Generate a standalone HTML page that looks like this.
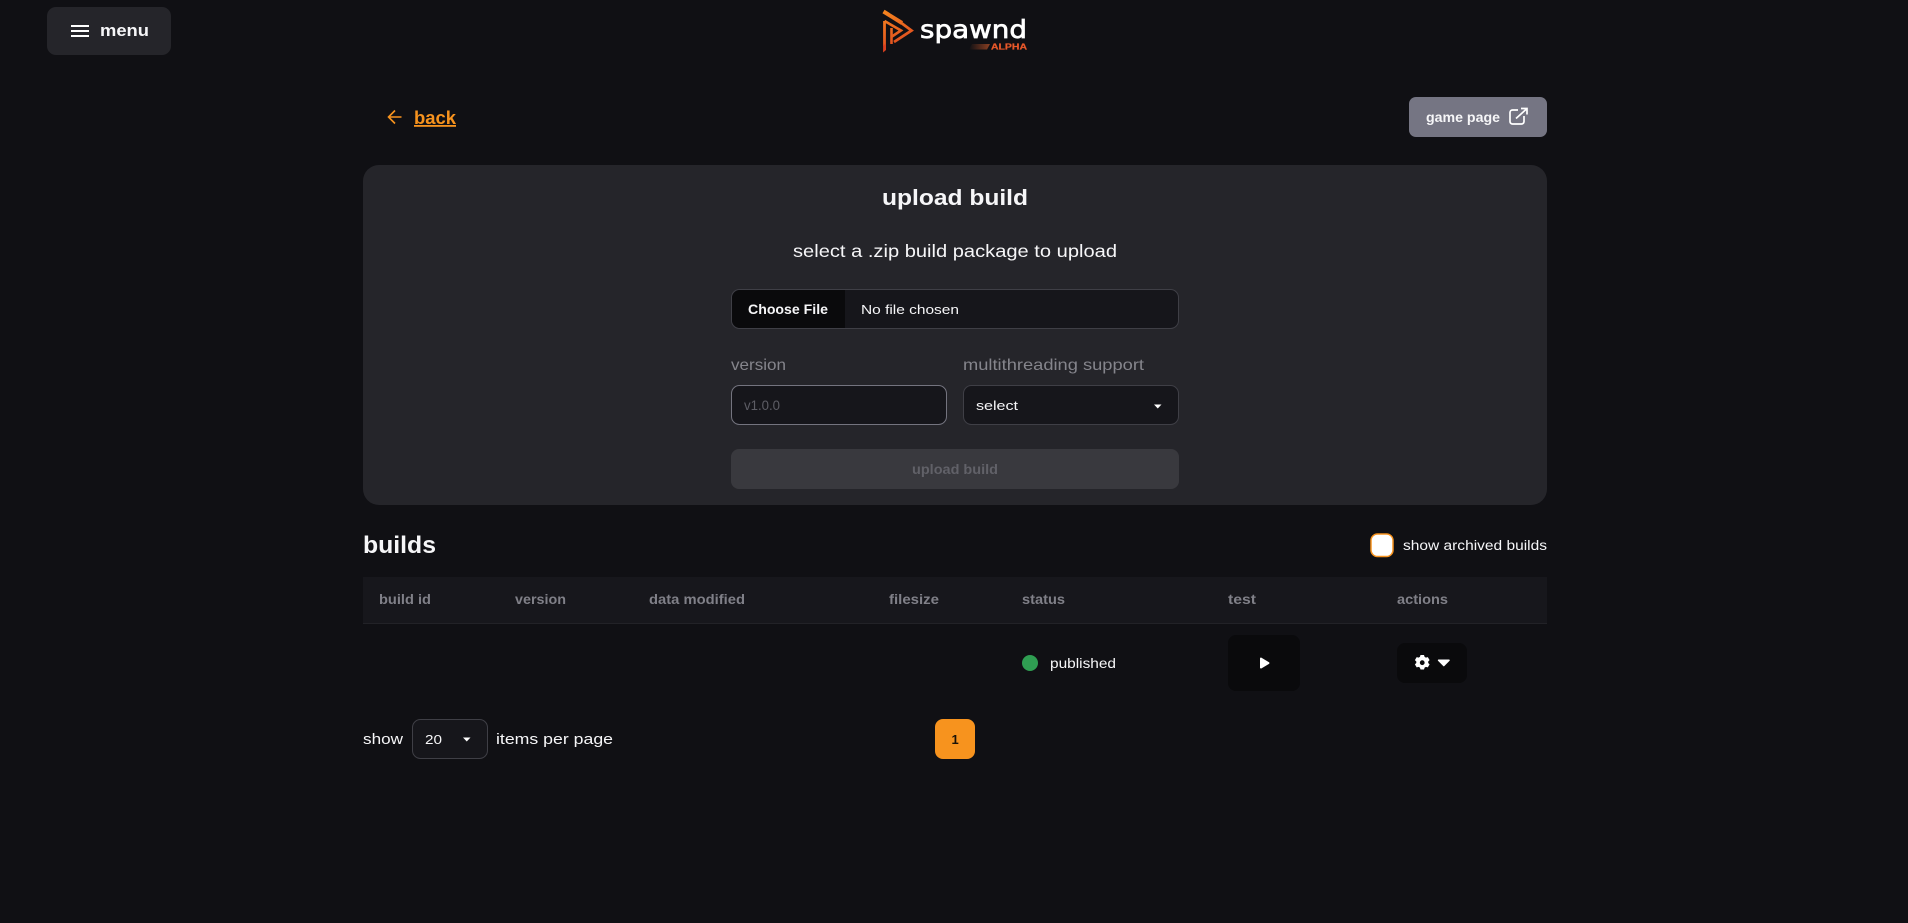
<!DOCTYPE html>
<html lang="en">
<head>
<meta charset="utf-8">
<title>spawnd - upload build</title>
<style>
html,body{margin:0;padding:0;background:#101014;width:1908px;height:923px;overflow:hidden}
svg{display:block}
text{font-family:"Liberation Sans",sans-serif;fill:#f6f6f8}
.b{font-weight:700}
</style>
</head>
<body>
<svg width="1908" height="923" viewBox="0 0 1908 923" xmlns="http://www.w3.org/2000/svg">
<defs>
<linearGradient id="lg" gradientUnits="userSpaceOnUse" x1="885" y1="9" x2="905" y2="52"><stop offset="0" stop-color="#f7871f"/><stop offset="1" stop-color="#d9401f"/></linearGradient>
<linearGradient id="bar" x1="0" y1="0" x2="1" y2="0"><stop offset="0" stop-color="#101014"/><stop offset="1" stop-color="#8a3f22"/></linearGradient>
</defs>
<rect width="1908" height="923" fill="#101014"/>

<!-- menu -->
<rect x="47" y="7" width="124" height="48" rx="9" fill="#25252a"/>
<path d="M71 26h18M71 31h18M71 36h18" stroke="#fff" stroke-width="1.900"/>
<text class="b" x="100" y="36" font-size="17" textLength="49" lengthAdjust="spacingAndGlyphs">menu</text>

<!-- logo -->
<g fill="none" stroke="url(#lg)" stroke-linejoin="miter">
<path d="M883.500 11.500 L902 23" stroke-width="4"/>
<path d="M900 22 L911.500 30.500 L894 42" stroke-width="2.800"/>
<path d="M884.500 21 V46" stroke-width="2.800"/>
<path d="M884.500 21 L901 30.500 L892 36.500" stroke-width="2.600"/>
<path d="M891.500 28 V44" stroke-width="2.600"/>
</g>
<path d="M883.100 44.500 L886 44.500 V50 L883.100 52.500 Z" fill="#d9401f"/>
<text x="920" y="38" font-size="25" textLength="107" lengthAdjust="spacingAndGlyphs" stroke="#fff" stroke-width=".7" style="font-family:'DejaVu Sans',sans-serif;fill:#fff">spawnd</text>
<path d="M972 44h18l-3 5.500h-18z" fill="url(#bar)"/>
<text class="b" x="991" y="49.500" font-size="8" textLength="36" lengthAdjust="spacingAndGlyphs" stroke="#e8582a" stroke-width=".25" style="fill:#e8582a">ALPHA</text>

<!-- back -->
<path d="M401.500 117H389M395 110.500L388.500 117L395 123.500" fill="none" stroke="#f7931e" stroke-width="1.600"/>
<text class="b" x="414" y="124" font-size="18" textLength="42" lengthAdjust="spacingAndGlyphs" style="fill:#f7931e" text-decoration="underline">back</text>

<!-- game page -->
<rect x="1409" y="97" width="138" height="40" rx="7" fill="#757583"/>
<text class="b" x="1426" y="122" font-size="13.500" textLength="74" lengthAdjust="spacingAndGlyphs">game page</text>
<path d="M1518 110h-5.500a2.500 2.500 0 0 0-2.500 2.500v9a2.500 2.500 0 0 0 2.500 2.500h9a2.500 2.500 0 0 0 2.500-2.500v-5.500M1516 118.500l10.500-9.500M1521 108.500h6v6" fill="none" stroke="#fff" stroke-width="1.700"/>

<!-- card -->
<rect x="363" y="165" width="1184" height="340" rx="16" fill="#25252a"/>
<text class="b" x="882" y="205" font-size="22" textLength="146" lengthAdjust="spacingAndGlyphs">upload build</text>
<text x="793" y="257" font-size="17.500" textLength="324" lengthAdjust="spacingAndGlyphs">select a .zip build package to upload</text>

<!-- file -->
<rect x="731.500" y="289.500" width="447" height="39" rx="8" fill="#16161b" stroke="#3f3f46"/>
<path d="M845 290H740a8 8 0 0 0-8 8v22a8 8 0 0 0 8 8h105z" fill="#0a0a0c"/>
<text class="b" x="748" y="314" font-size="13.500" textLength="80" lengthAdjust="spacingAndGlyphs">Choose File</text>
<text x="861" y="314" font-size="13" textLength="98" lengthAdjust="spacingAndGlyphs">No file chosen</text>

<!-- fields -->
<text x="731" y="370" font-size="16" textLength="55" lengthAdjust="spacingAndGlyphs" style="fill:#85858c">version</text>
<text x="963" y="370" font-size="16" textLength="181" lengthAdjust="spacingAndGlyphs" style="fill:#85858c">multithreading support</text>
<rect x="731.500" y="385.500" width="215" height="39" rx="8" fill="#16161b" stroke="#74747f"/>
<text x="744" y="410" font-size="13.500" textLength="36" lengthAdjust="spacingAndGlyphs" style="fill:#5d5d65">v1.0.0</text>
<rect x="963.500" y="385.500" width="215" height="39" rx="8" fill="#16161b" stroke="#3f3f46"/>
<text x="976" y="410" font-size="13" textLength="42" lengthAdjust="spacingAndGlyphs">select</text>
<path d="M1154 404.500h7.500l-3.750 4z" fill="#fff"/>

<!-- upload button -->
<rect x="731" y="449" width="448" height="40" rx="8" fill="#39393e"/>
<text class="b" x="912" y="474" font-size="13.500" textLength="86" lengthAdjust="spacingAndGlyphs" style="fill:#616168">upload build</text>

<!-- builds -->
<text class="b" x="363" y="553" font-size="24" textLength="73" lengthAdjust="spacingAndGlyphs">builds</text>
<rect x="1371" y="534" width="22" height="22.500" rx="6.500" fill="#fff" stroke="#f7931e" stroke-width="1.500"/>
<text x="1403" y="550" font-size="13.500" textLength="144" lengthAdjust="spacingAndGlyphs">show archived builds</text>

<!-- table -->
<rect x="363" y="577" width="1184" height="46" fill="#17171c"/>
<rect x="363" y="623" width="1184" height="1" fill="#222227"/>
<g class="b" font-size="13.500" style="font-weight:700">
<text x="379" y="604" textLength="52" lengthAdjust="spacingAndGlyphs" style="fill:#808088">build id</text>
<text x="515" y="604" textLength="51" lengthAdjust="spacingAndGlyphs" style="fill:#808088">version</text>
<text x="649" y="604" textLength="96" lengthAdjust="spacingAndGlyphs" style="fill:#808088">data modified</text>
<text x="889" y="604" textLength="50" lengthAdjust="spacingAndGlyphs" style="fill:#808088">filesize</text>
<text x="1022" y="604" textLength="43" lengthAdjust="spacingAndGlyphs" style="fill:#808088">status</text>
<text x="1228" y="604" textLength="28" lengthAdjust="spacingAndGlyphs" style="fill:#808088">test</text>
<text x="1397" y="604" textLength="51" lengthAdjust="spacingAndGlyphs" style="fill:#808088">actions</text>
</g>

<!-- row -->
<circle cx="1030" cy="663" r="8" fill="#2f9e52"/>
<text x="1050" y="668" font-size="13.500" textLength="66" lengthAdjust="spacingAndGlyphs">published</text>
<rect x="1228" y="635" width="72" height="56" rx="8" fill="#0a0a0c"/>
<path d="M1260 658.500a1 1 0 0 1 1.500-.8l7.500 4.500a1 1 0 0 1 0 1.700l-7.500 4.500a1 1 0 0 1-1.500-.8z" fill="#fff"/>
<rect x="1397" y="643" width="70" height="40" rx="8" fill="#0a0a0c"/>
<path fill="#fff" fill-rule="evenodd" d="M1420.500 655h3.500l.6 1.900 1.300.7 1.900-.5 1.800 3-1.400 1.400v1.500l1.400 1.400-1.800 3-1.900-.5-1.300.7-.6 1.900h-3.500l-.6-1.900-1.300-.7-1.900.5-1.800-3 1.400-1.400v-1.500l-1.400-1.400 1.800-3 1.900.5 1.300-.7zM1422.250 660.300a2.400 2.400 0 1 0 0 4.800 2.400 2.400 0 0 0 0-4.800z"/>
<path d="M1438.500 659.500h10.500a.8.800 0 0 1 .6 1.300l-5.200 5.200a.8.800 0 0 1-1.200 0l-5.200-5.200a.8.800 0 0 1 .5-1.300z" fill="#fff"/>

<!-- pager -->
<text x="363" y="744" font-size="15" textLength="40" lengthAdjust="spacingAndGlyphs">show</text>
<rect x="412.500" y="719.500" width="75" height="39" rx="8" fill="#16161b" stroke="#3f3f46"/>
<text x="425" y="744" font-size="13" textLength="17" lengthAdjust="spacingAndGlyphs">20</text>
<path d="M463 737.500h7.500l-3.750 4z" fill="#fff"/>
<text x="496" y="744" font-size="15" textLength="117" lengthAdjust="spacingAndGlyphs">items per page</text>
<rect x="935" y="719" width="40" height="40" rx="8" fill="#f7931e"/>
<text class="b" x="951.500" y="744" font-size="13" style="fill:#1a1208">1</text>
</svg>
</body>
</html>
